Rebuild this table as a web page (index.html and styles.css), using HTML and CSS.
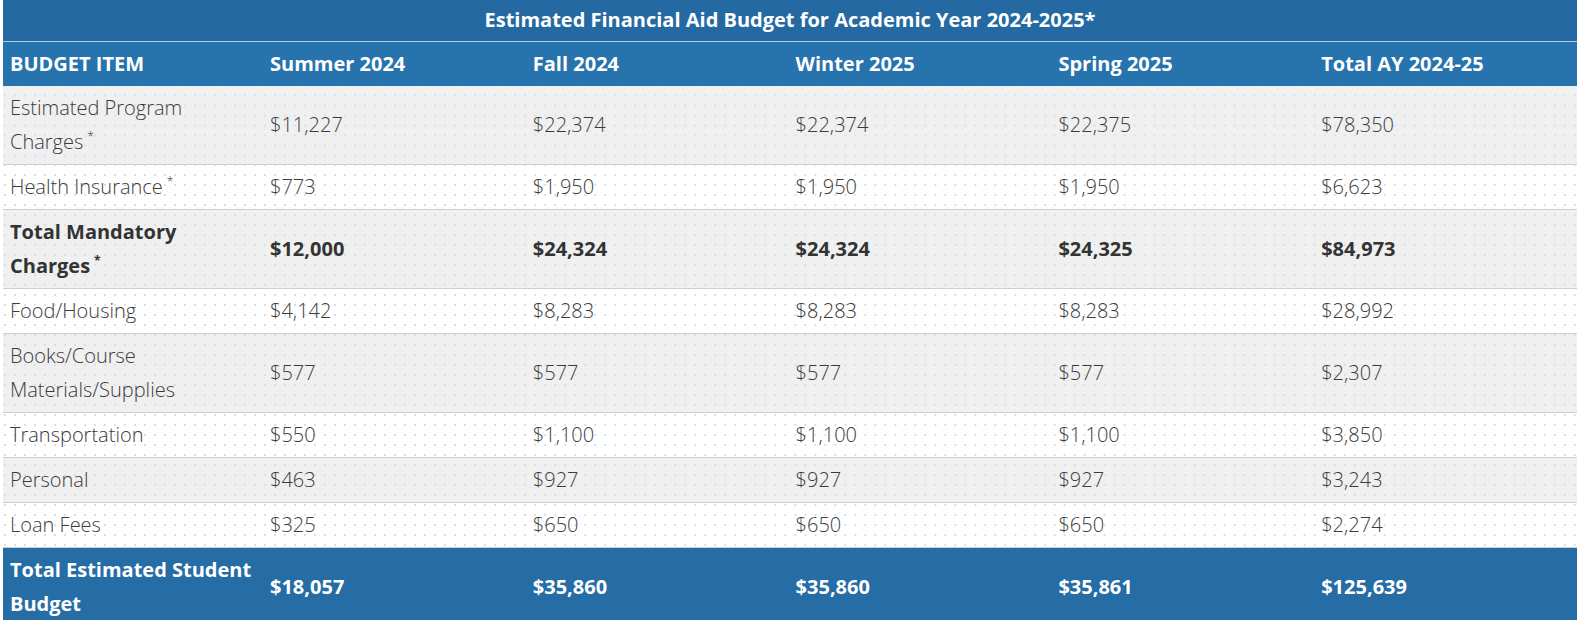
FILE: index.html
```html
<!DOCTYPE html>
<html lang="en">
<head>
<meta charset="utf-8">
<title>Estimated Financial Aid Budget</title>
<link rel="stylesheet" href="styles.css">
</head>
<body>
<table class="budget">
  <colgroup>
    <col class="c-item">
    <col class="c-term">
    <col class="c-term">
    <col class="c-term">
    <col class="c-term">
    <col class="c-term">
  </colgroup>
  <thead>
    <tr class="title-row"><th colspan="6">Estimated Financial Aid Budget for Academic Year 2024-2025*</th></tr>
    <tr class="head-row">
      <th>BUDGET ITEM</th>
      <th>Summer 2024</th>
      <th>Fall 2024</th>
      <th>Winter 2025</th>
      <th>Spring 2025</th>
      <th>Total AY 2024-25</th>
    </tr>
  </thead>
  <tbody>
    <tr class="odd">
      <td><span class="word">Estimated Program</span> <span class="word">Charges<sup class="note">*</sup></span></td>
      <td>$11,227</td><td>$22,374</td><td>$22,374</td><td>$22,375</td><td>$78,350</td>
    </tr>
    <tr class="even">
      <td><span class="word">Health Insurance<sup class="note">*</sup></span></td>
      <td>$773</td><td>$1,950</td><td>$1,950</td><td>$1,950</td><td>$6,623</td>
    </tr>
    <tr class="odd strong">
      <td><span class="word">Total Mandatory</span> <span class="word">Charges<sup class="note">*</sup></span></td>
      <td>$12,000</td><td>$24,324</td><td>$24,324</td><td>$24,325</td><td>$84,973</td>
    </tr>
    <tr class="even">
      <td>Food/Housing</td>
      <td>$4,142</td><td>$8,283</td><td>$8,283</td><td>$8,283</td><td>$28,992</td>
    </tr>
    <tr class="odd">
      <td>Books/Course Materials/Supplies</td>
      <td>$577</td><td>$577</td><td>$577</td><td>$577</td><td>$2,307</td>
    </tr>
    <tr class="even">
      <td>Transportation</td>
      <td>$550</td><td>$1,100</td><td>$1,100</td><td>$1,100</td><td>$3,850</td>
    </tr>
    <tr class="odd">
      <td>Personal</td>
      <td>$463</td><td>$927</td><td>$927</td><td>$927</td><td>$3,243</td>
    </tr>
    <tr class="even">
      <td>Loan Fees</td>
      <td>$325</td><td>$650</td><td>$650</td><td>$650</td><td>$2,274</td>
    </tr>
  </tbody>
  <tfoot>
    <tr class="total-row">
      <td>Total Estimated Student Budget</td>
      <td>$18,057</td><td>$35,860</td><td>$35,860</td><td>$35,861</td><td>$125,639</td>
    </tr>
  </tfoot>
</table>
</body>
</html>
```
FILE: styles.css
```css
html, body {
  margin: 0;
  padding: 0;
  background: #ffffff;
}
body {
  padding-left: 3px;
  font-family: "Open Sans", "Noto Sans", "Liberation Sans", sans-serif;
  color: #3b3b3b;
  overflow: hidden;
}
.budget {
  width: 1574px;
  table-layout: fixed;
  border-collapse: collapse;
  font-size: 20px;
  line-height: 34px;
}
.c-item { width: 260px; }
.c-term { width: 262.8px; }

.budget th,
.budget td {
  text-align: left;
  vertical-align: middle;
  padding: 5px 7px;
}
.budget .title-row th {
  background: #2569a2;
  color: #ffffff;
  text-align: center;
  font-weight: 700;
  font-size: 20px;
  height: 41px;
  padding: 0 7px;
  line-height: 38px;
  border-bottom: 1px solid #b4cbe0;
  box-sizing: border-box;
}
.budget .head-row th {
  background: #2773ad;
  color: #ffffff;
  font-weight: 700;
  height: 44px;
  box-sizing: border-box;
}
.budget tbody td {
  font-weight: 300;
  border-bottom: 1px solid #cdcdcd;
  background-image: radial-gradient(circle, #d9dfe9 0.8px, rgba(255,255,255,0) 1.3px);
  background-size: 10px 10px;
  background-attachment: fixed;
}
.budget tbody .odd td { background-color: #f0f0f0; }
.budget tbody .even td { background-color: #ffffff; }
.budget tbody .strong td { font-weight: 700; color: #333333; }

.word { white-space: nowrap; }

.budget .note {
  font-size: 12px;
  line-height: 0;
  vertical-align: 8px;
  margin-left: 4px;
}
.budget .total-row td {
  background: #266ca5;
  color: #ffffff;
  font-weight: 700;
}
```
